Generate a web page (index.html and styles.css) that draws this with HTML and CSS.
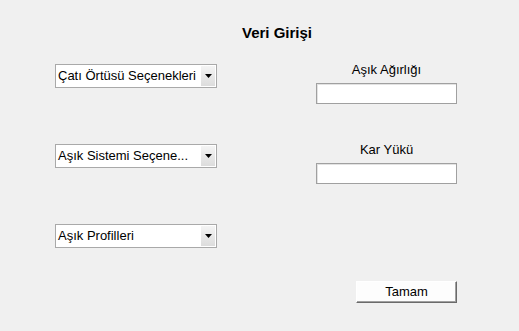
FILE: index.html
```html
<!DOCTYPE html>
<html lang="tr">
<head>
<meta charset="utf-8">
<title>Veri Girişi</title>
<link rel="stylesheet" href="styles.css">
</head>
<body>
<div class="title">Veri Girişi</div>
<div class="main">
  <div class="left">
    <div class="select"><span class="select-text">Çatı Örtüsü Seçenekleri</span><span class="select-btn"><svg width="7" height="4" viewBox="0 0 7 4"><path d="M0 0H7L3.5 4Z" fill="#000"/></svg></span></div>
    <div class="select"><span class="select-text">Aşık Sistemi Seçene...</span><span class="select-btn"><svg width="7" height="4" viewBox="0 0 7 4"><path d="M0 0H7L3.5 4Z" fill="#000"/></svg></span></div>
    <div class="select"><span class="select-text">Aşık Profilleri</span><span class="select-btn"><svg width="7" height="4" viewBox="0 0 7 4"><path d="M0 0H7L3.5 4Z" fill="#000"/></svg></span></div>
  </div>
  <div class="right">
    <div class="field">
      <div class="label">Aşık Ağırlığı</div>
      <div class="input"></div>
    </div>
    <div class="field">
      <div class="label">Kar Yükü</div>
      <div class="input"></div>
    </div>
  </div>
</div>
<div class="footer">
  <div class="button">Tamam</div>
</div>
</body>
</html>
```
FILE: styles.css
```css
html, body {
  margin: 0;
  padding: 0;
}
body {
  background: #f0f0f0;
  font-family: "Liberation Sans", Arial, sans-serif;
  font-size: 13px;
  color: #000;
  width: 519px;
  height: 331px;
  overflow: hidden;
}
.title {
  padding-top: 24px;
  margin-left: 242px;
  font-size: 15px;
  font-weight: bold;
  line-height: 17px;
}
.main {
  display: flex;
  margin-top: 21px;
  padding-left: 55px;
}
.left {
  display: flex;
  flex-direction: column;
  gap: 56px;
  padding-top: 2px;
  width: 162px;
}
.select {
  box-sizing: border-box;
  height: 24px;
  width: 162px;
  border: 1px solid #a9a9a9;
  background: #fff;
  display: flex;
  align-items: stretch;
}
.select-text {
  flex: 1;
  padding-left: 2px;
  line-height: 22px;
  white-space: nowrap;
  overflow: hidden;
}
.select-btn {
  width: 14px;
  margin: 1px;
  background: linear-gradient(#f4f4f4, #dcdcdc);
  display: flex;
  align-items: center;
  justify-content: center;
}
.right {
  margin-left: 99px;
  width: 141px;
  display: flex;
  flex-direction: column;
  gap: 38px;
}
.label {
  text-align: center;
  line-height: 15px;
  margin-bottom: 6px;
}
.input {
  box-sizing: border-box;
  height: 21px;
  width: 141px;
  background: #fff;
  border: 1px solid #a0a0a0;
  box-shadow: inset 1px 1px 0 #e3e3e3;
}
.footer {
  display: flex;
  justify-content: flex-end;
  padding-right: 62px;
  margin-top: 33px;
}
.button {
  box-sizing: border-box;
  width: 101px;
  height: 22px;
  background: #fdfdfd;
  border-top: 1px solid #ffffff;
  border-left: 1px solid #ffffff;
  border-right: 1px solid #6a6a6a;
  border-bottom: 1px solid #6a6a6a;
  box-shadow: inset -1px -1px 0 #a0a0a0, 0 0 0 0 #000;
  text-align: center;
  line-height: 19px;
}
```
